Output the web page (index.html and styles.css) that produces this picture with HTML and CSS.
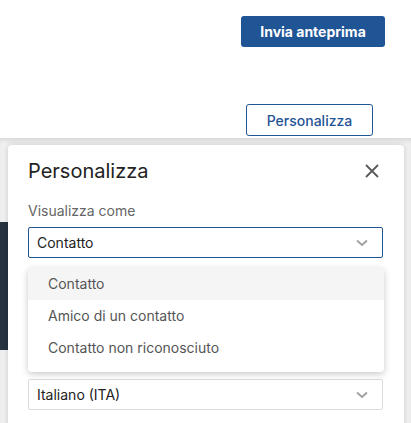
FILE: index.html
```html
<!DOCTYPE html>
<html lang="it">
<head>
<meta charset="utf-8">
<link rel="stylesheet" href="styles.css">
</head>
<body>
<div class="top">
  <div class="row row-send"><button class="btn-primary">Invia anteprima</button></div>
  <div class="row row-custom"><button class="btn-outline">Personalizza</button></div>
</div>
<div class="workspace">
  <div class="dark-block"></div>
  <div class="panel">
    <div class="panel-head">
      <h2 class="panel-title">Personalizza</h2>
      <svg class="close" width="16" height="16" viewBox="0 0 16 16"><path d="M2 2L14 14M14 2L2 14" stroke="#5a5a5a" stroke-width="1.8" fill="none"/></svg>
    </div>
    <div class="label">Visualizza come</div>
    <div class="field">
      <div class="select select-active">
        <span>Contatto</span>
        <svg class="chev" width="12" height="8" viewBox="0 0 12 8"><path d="M1 1.5L6 6L11 1.5" stroke="#a0a0a0" stroke-width="1.8" fill="none"/></svg>
      </div>
      <ul class="menu">
        <li class="menu-item selected">Contatto</li>
        <li class="menu-item">Amico di un contatto</li>
        <li class="menu-item">Contatto non riconosciuto</li>
      </ul>
    </div>
    <div class="spacer"></div>
    <div class="select select-lang">
      <span>Italiano (ITA)</span>
      <svg class="chev" width="12" height="8" viewBox="0 0 12 8"><path d="M1 1.5L6 6L11 1.5" stroke="#a0a0a0" stroke-width="1.8" fill="none"/></svg>
    </div>
  </div>
</div>
</body>
</html>
```
FILE: styles.css
```css
* { box-sizing: border-box; }
html, body { margin: 0; padding: 0; }
body {
  width: 411px;
  height: 423px;
  overflow: hidden;
  background: #fff;
  font-family: Inter, "Noto Sans", sans-serif;
}
.top { height: 138px; }
.row { display: flex; }
.row-send { padding: 16px 0 0 241px; }
.row-custom { padding: 57px 0 0 246px; }
.btn-primary {
  width: 144px;
  height: 31px;
  border: none;
  border-radius: 3px;
  background: #1f5495;
  color: #fff;
  font-family: Inter, sans-serif;
  font-weight: 700;
  font-size: 14px;
  padding: 0;
}
.btn-outline {
  width: 127px;
  height: 32px;
  border: 1.5px solid #1f5495;
  border-radius: 3px;
  background: #fff;
  color: #1f5495;
  font-family: Inter, sans-serif;
  font-weight: 500;
  font-size: 14px;
  padding: 0;
}
.workspace {
  position: relative;
  height: 285px;
  background: #f1f1f1;
  box-shadow: inset 0 4px 5px -2px rgba(0,0,0,0.12);
}
.dark-block {
  position: absolute;
  left: 0;
  top: 84px;
  width: 10px;
  height: 128px;
  background: #283341;
}
.panel {
  position: absolute;
  left: 8px;
  top: 7px;
  width: 396px;
  height: 290px;
  background: #fff;
  border-radius: 4px;
  box-shadow: 0 0 6px rgba(0,0,0,0.16);
  padding: 0 20px;
}
.panel-head {
  display: flex;
  align-items: center;
  justify-content: space-between;
  height: 43px;
  padding-top: 9px;
}
.panel-title {
  margin: 0;
  font-weight: 400;
  font-size: 20px;
  color: #222;
}
.close { margin-right: 4px; }
.label {
  margin-top: 14px;
  font-size: 14px;
  color: #666;
  line-height: 18px;
}
.field { position: relative; margin-top: 7px; }
.select {
  display: flex;
  align-items: center;
  justify-content: space-between;
  height: 31px;
  width: 355px;
  padding: 0 14px 0 8px;
  border: 1px solid #dcdcdc;
  border-radius: 2px;
  font-size: 14px;
  color: #222;
}
.select-active { border-color: #1f5495; }
.menu {
  position: absolute;
  left: 0;
  top: 41px;
  width: 356px;
  margin: 0;
  padding: 0 0 8px;
  list-style: none;
  background: #fff;
  border-radius: 4px;
  box-shadow: 0 2px 7px rgba(0,0,0,0.22);
  z-index: 2;
}
.menu-item {
  height: 32px;
  line-height: 32px;
  padding-left: 20px;
  font-size: 14px;
  color: #555;
}
.menu-item.selected { background: #f5f5f5; }
.spacer { height: 121px; }
```
